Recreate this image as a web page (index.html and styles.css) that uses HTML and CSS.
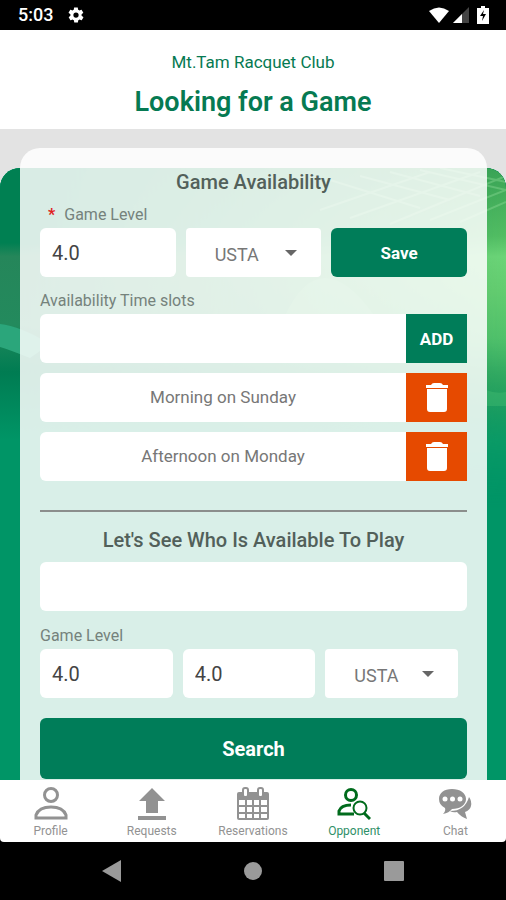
FILE: index.html
```html
<!DOCTYPE html>
<html lang="en">
<head>
    <meta charset="UTF-8">
    <meta name="viewport" content="width=device-width, initial-scale=1.0">
    <title>Looking for a Game</title>
    <link rel="stylesheet" href="styles.css">
</head>
<body>
    <div class="status-bar">
        <span class="clock">5:03</span>
        <svg class="gear" width="18" height="18" viewBox="0 0 24 24" fill="#fff"><path d="M19.4 13c0-.3.1-.6.1-1s0-.7-.1-1l2.1-1.6c.2-.2.2-.4.1-.6l-2-3.500c-.1-.2-.4-.3-.6-.2l-2.500 1c-.5-.4-1.100-.7-1.700-1l-.4-2.600c0-.3-.2-.5-.5-.5h-4c-.3 0-.5.2-.5.4l-.4 2.700c-.6.2-1.100.6-1.700 1l-2.500-1c-.2-.1-.5 0-.6.2l-2 3.500c-.1.2-.1.4.1.6L4.600 11c0 .3-.1.7-.1 1s0 .7.1 1l-2.100 1.600c-.2.2-.2.4-.1.6l2 3.500c.1.2.4.3.6.2l2.500-1c.5.4 1.100.7 1.700 1l.4 2.600c0 .3.2.5.5.5h4c.3 0 .5-.2.5-.4l.4-2.700c.6-.2 1.100-.6 1.700-1l2.500 1c.2.1.5 0 .6-.2l2-3.500c.1-.2.1-.4-.1-.6zM12 15.500a3.500 3.500 0 1 1 0-7 3.500 3.500 0 0 1 0 7z"/></svg>
        <div class="status-icons">
            <svg width="20" height="16" viewBox="0 0 20 16" fill="#fff"><path d="M0 4Q10-3 20 4L10 16z"/></svg>
            <svg width="16" height="16" viewBox="0 0 16 16"><path d="M0 16L16 0V16z" fill="#444"/><path d="M0 16L9 7V16z" fill="#fff"/></svg>
            <svg width="12" height="18" viewBox="0 0 12 18"><path d="M4 0h4v2h4v16H0V2h4z" fill="#fff"/><path d="M7 4L3 10H6l-1 5 4-7H6z" fill="#000"/></svg>
        </div>
    </div>

    <header class="header">
        <p class="club">Mt.Tam Racquet Club</p>
        <h1>Looking for a Game</h1>
    </header>

    <main class="content">
        <div class="court">
            <svg class="scenery" viewBox="0 0 506 340" preserveAspectRatio="none" aria-hidden="true">
                <defs>
                    <linearGradient id="left" x1="0" y1="0" x2="0" y2="1">
                        <stop offset="0" stop-color="#008052"/>
                        <stop offset=".22" stop-color="#008052"/>
                        <stop offset=".26" stop-color="#25865a"/>
                        <stop offset=".46" stop-color="#238a5d"/>
                        <stop offset=".6" stop-color="#007c52"/>
                        <stop offset=".8" stop-color="#009566"/>
                    </linearGradient>
                    <linearGradient id="right" x1="0" y1="0" x2="0" y2="1">
                        <stop offset="0" stop-color="#3ba456"/>
                        <stop offset=".2" stop-color="#52bd63"/>
                        <stop offset=".26" stop-color="#6bd477"/>
                        <stop offset=".36" stop-color="#64cd70"/>
                        <stop offset=".65" stop-color="#3cb565"/>
                        <stop offset=".8" stop-color="#23a866"/>
                        <stop offset="1" stop-color="#009566"/>
                    </linearGradient>
                    <linearGradient id="fade">
                        <stop offset="0" stop-color="#fff" stop-opacity="0"/>
                        <stop offset=".04" stop-color="#fff" stop-opacity="0"/>
                        <stop offset=".4" stop-color="#fff" stop-opacity=".3"/>
                        <stop offset="1" stop-color="#fff"/>
                    </linearGradient>
                    <linearGradient id="drop" x1="0" y1="0" x2="0" y2="1">
                        <stop offset=".5" stop-color="#fff"/>
                        <stop offset=".8" stop-color="#fff" stop-opacity=".3"/>
                        <stop offset="1" stop-color="#fff" stop-opacity="0"/>
                    </linearGradient>
                    <mask id="blend"><rect width="506" height="340" fill="url(#fade)"/></mask>
                    <mask id="low"><rect width="506" height="340" fill="url(#drop)"/></mask>
                </defs>
                <rect width="506" height="340" fill="#009566"/>
                <rect width="506" height="340" fill="url(#left)"/>
                <path d="M0 156Q20 158 50 176L30 190Q10 182 0 179z" fill="#2ba67b"/>
                <g mask="url(#low)"><rect width="506" height="340" fill="url(#right)" mask="url(#blend)"/></g>
                <g stroke="#8fdc98" stroke-width="2" fill="none" opacity=".4">
                    <path d="M330 12L420 40M360 8L450 32M390 4L480 28M420 2L506 22M440 0L506 14M320 42L430 4M350 50L480 4M390 56L506 8M430 52L506 22M460 54L506 34"/>
                </g>
                <path d="M284 150Q320 70 376 150z" fill="#8be695" opacity=".2"/>
                <path d="M486 222q10 4 20 2v14h-20z" fill="#45be74" opacity=".4"/>
            </svg>
            <div class="card">
                <h2>Game Availability</h2>
                <form class="availability">
                    <label class="field-label required" for="level"><span class="star">*</span>Game Level</label>
                    <div class="levels">
                        <input type="text" id="level" value="4.0">
                        <div class="select-box">
                            <select aria-label="Rating system">
                                <option>USTA</option>
                            </select>
                        </div>
                        <button type="button" class="btn">Save</button>
                    </div>
                    <label class="field-label slots-label" for="slot">Availability Time slots</label>
                    <div class="slot">
                        <input type="text" id="slot">
                        <button type="button" class="btn slot-btn">ADD</button>
                    </div>
                    <div class="slot">
                        <p class="slot-name">Morning on Sunday</p>
                        <button type="button" class="btn slot-btn delete" aria-label="Delete Morning on Sunday">
                            <svg width="22" height="30" viewBox="0 0 22 30" fill="#fff"><path d="M0 2h5q1-2 3-2h6q2 0 3 2h5v3H0zM1 6h20v20a3 3 0 0 1-3 3H4a3 3 0 0 1-3-3z"/></svg>
                        </button>
                    </div>
                    <div class="slot">
                        <p class="slot-name">Afternoon on Monday</p>
                        <button type="button" class="btn slot-btn delete" aria-label="Delete Afternoon on Monday">
                            <svg width="22" height="30" viewBox="0 0 22 30" fill="#fff"><path d="M0 2h5q1-2 3-2h6q2 0 3 2h5v3H0zM1 6h20v20a3 3 0 0 1-3 3H4a3 3 0 0 1-3-3z"/></svg>
                        </button>
                    </div>
                </form>
                <hr>
                <h2>Let's See Who Is Available To Play</h2>
                <form class="search">
                    <input type="text" aria-label="Time slot">
                    <label class="field-label search-label" for="levelFrom">Game Level</label>
                    <div class="levels range">
                        <input type="text" id="levelFrom" value="4.0">
                        <input type="text" aria-label="Game Level to" value="4.0">
                        <div class="select-box">
                            <select aria-label="Rating system">
                                <option>USTA</option>
                            </select>
                        </div>
                    </div>
                    <button type="button" class="btn search-btn">Search</button>
                </form>
            </div>
        </div>
    </main>

    <nav class="tabs">
        <a href="#profile">
            <svg width="34" height="34" viewBox="0 0 34 34" fill="none" stroke="#929292" stroke-width="3"><circle cx="17" cy="8" r="6.500"/><path d="M2 31V28Q5 20 17 20T32 28V31z"/></svg>
            Profile
        </a>
        <a href="#requests">
            <svg width="34" height="34" viewBox="0 0 34 34" fill="#929292"><path d="M17 1L30 14H23V26H11V14H4zM3 29H31V33H3z"/></svg>
            Requests
        </a>
        <a href="#reservations">
            <svg width="34" height="34" viewBox="0 0 34 34"><rect x="1" y="5" width="32" height="28" rx="2" fill="#929292"/><g fill="#fff"><path d="M3 13h6v5H3zM11 13h5v5h-5zM18 13h5v5h-5zM25 13h6v5h-6zM3 20h6v5H3zM11 20h5v5h-5zM18 20h5v5h-5zM25 20h6v5h-6zM3 27h6v4H3zM11 27h5v4h-5zM18 27h5v4h-5zM25 27h6v4h-6z"/></g><g fill="#fff" stroke="#929292" stroke-width="2"><rect x="7" y="1" width="5" height="9" rx="2"/><rect x="22" y="1" width="5" height="9" rx="2"/></g></svg>
            Reservations
        </a>
        <a href="#opponent" class="active">
            <svg width="34" height="34" viewBox="0 0 34 34" fill="none" stroke="#006b1c"><circle cx="14" cy="8" r="5.500" stroke-width="3"/><path d="M17 27H2V24Q4 18 14 18" stroke-width="3"/><circle cx="23" cy="21" r="6.500" stroke-width="2"/><path d="M27 26L33 32" stroke-width="3"/></svg>
            Opponent
        </a>
        <a href="#chat">
            <svg width="34" height="34" viewBox="0 0 34 34"><path d="M31 10Q34 14 33 19 32 23 27 25L29 32Q23 30 19 25 15 26 12 24 27 24 31 10z" fill="#929292"/><path d="M14 2C22 2 28 6 28 12S22 22 14 22Q11 26 5 27 8 24 7 21 1 18 1 12C1 6 6 2 14 2z" fill="#929292"/><g fill="#fff"><circle cx="7" cy="12" r="2.500"/><circle cx="14.500" cy="12" r="2.500"/><circle cx="22" cy="12" r="2.500"/></g></svg>
            Chat
        </a>
    </nav>

    <div class="system-nav">
        <button type="button" aria-label="Back"><svg width="20" height="22" viewBox="0 0 20 22" fill="#9a9a9a"><path d="M0 11L19 0V22z"/></svg></button>
        <button type="button" aria-label="Home"><svg width="20" height="22" viewBox="0 0 20 22" fill="#9a9a9a"><circle cx="10" cy="11" r="9"/></svg></button>
        <button type="button" aria-label="Recents"><svg width="20" height="22" viewBox="0 0 20 22" fill="#9a9a9a"><rect x="0" y="1" width="20" height="20" rx="1"/></svg></button>
    </div>
</body>
</html>
```

FILE: styles.css
```css
* { margin: 0; padding: 0; box-sizing: border-box; }
body {
    height: 100vh;
    display: flex;
    flex-direction: column;
    font-family: Roboto, sans-serif;
    font-size: 17px;
    line-height: 20px;
    color: #777;
    background: black;
}
input, select, button {
    font: inherit;
    border: none;
}
svg { display: block; }

.status-bar {
    display: flex;
    align-items: center;
    gap: 14px;
    height: 30px;
    padding: 0 17px 0 18px;
    color: white;
    font-size: 18px;
    font-weight: 500;
    flex-shrink: 0;
}
.status-icons {
    display: flex;
    align-items: center;
    gap: 4px;
    margin-left: auto;
}
.status-icons svg:last-child { margin-left: 4px; }

.header {
    padding: 22px 20px 11px;
    background: white;
    color: #067a52;
    text-align: center;
    flex-shrink: 0;
}
.club { margin-bottom: 14px; }
h1 {
    font-size: 27px;
    line-height: 32px;
    font-weight: 600;
}

.content {
    flex: 1;
    min-height: 0;
    padding-top: 39px;
    overflow: hidden;
    background: #e3e3e3;
}
.court {
    position: relative;
    height: 100%;
    padding: 0 19px 0 20px;
    background: #009566;
    border-radius: 20px 20px 0 0;
}
.scenery {
    position: absolute;
    top: 0;
    left: 0;
    width: 100%;
    height: 340px;
    border-radius: 20px 20px 0 0;
}
.card {
    position: relative;
    top: -20px;
    padding: 22px 20px 20px;
    background: rgba(255, 255, 255, 0.85);
    border-radius: 20px 20px 0 0;
}
h2 {
    font-size: 20px;
    line-height: 24px;
    font-weight: 500;
    color: #52605a;
    text-align: center;
}
.field-label {
    display: block;
    font-size: 16px;
    color: #75827c;
    margin-bottom: 3px;
}
.required {
    margin-top: 11px;
    padding-left: 8px;
}
.star {
    margin-right: 9px;
    color: #e02020;
    font-weight: 700;
}
.slots-label { margin-top: 14px; }
input {
    width: 100%;
    min-width: 0;
    height: 49px;
    padding: 0 12px;
    font-size: 20px;
    color: #444;
    background: white;
    border-radius: 6px;
}
.levels {
    display: grid;
    grid-template-columns: repeat(3, 1fr);
    gap: 10px;
}
.range { padding-right: 9px; }
.select-box { position: relative; }
.select-box::after {
    content: "";
    position: absolute;
    top: 22px;
    right: 24px;
    border: 6px solid transparent;
    border-top-color: #666;
    border-bottom: none;
    pointer-events: none;
}
select {
    appearance: none;
    width: 100%;
    height: 49px;
    padding: 5px 29px 0;
    font-size: 18px;
    color: #777;
    background: white;
    border-radius: 4px;
}
.btn {
    display: flex;
    align-items: center;
    justify-content: center;
    background: #007d59;
    color: white;
    font-weight: 700;
    border-radius: 6px;
    cursor: pointer;
}
.btn:hover { background: #006b4c; }
.slot {
    display: flex;
    margin-bottom: 10px;
}
.slot input, .slot-name {
    flex: 1;
    border-radius: 6px 0 0 6px;
}
.slot-name {
    line-height: 49px;
    background: white;
    text-align: center;
}
.slot-btn {
    width: 61px;
    height: 49px;
    border-radius: 0;
}
.delete { background: #e64a00; }
.delete:hover { background: #c94100; }
hr {
    margin: 29px 0 16px;
    border: none;
    border-top: 2px solid #8b8e8c;
}
.search { padding-top: 10px; }
.search-label { margin-top: 15px; }
.search-btn {
    width: 100%;
    height: 61px;
    margin-top: 20px;
    font-size: 20px;
}

.tabs {
    display: grid;
    grid-template-columns: repeat(5, 1fr);
    height: 62px;
    padding-top: 7px;
    background: white;
    border-radius: 0 0 4px 4px;
    flex-shrink: 0;
}
.tabs a {
    display: flex;
    flex-direction: column;
    align-items: center;
    gap: 2px;
    color: #929292;
    font-size: 12px;
    line-height: 16px;
    text-decoration: none;
}
.tabs .active { color: #2f8f68; }

.system-nav {
    display: grid;
    grid-template-columns: repeat(3, 1fr);
    height: 58px;
    padding: 0 42px;
    flex-shrink: 0;
}
.system-nav button {
    display: flex;
    align-items: center;
    justify-content: center;
    background: none;
}
```
